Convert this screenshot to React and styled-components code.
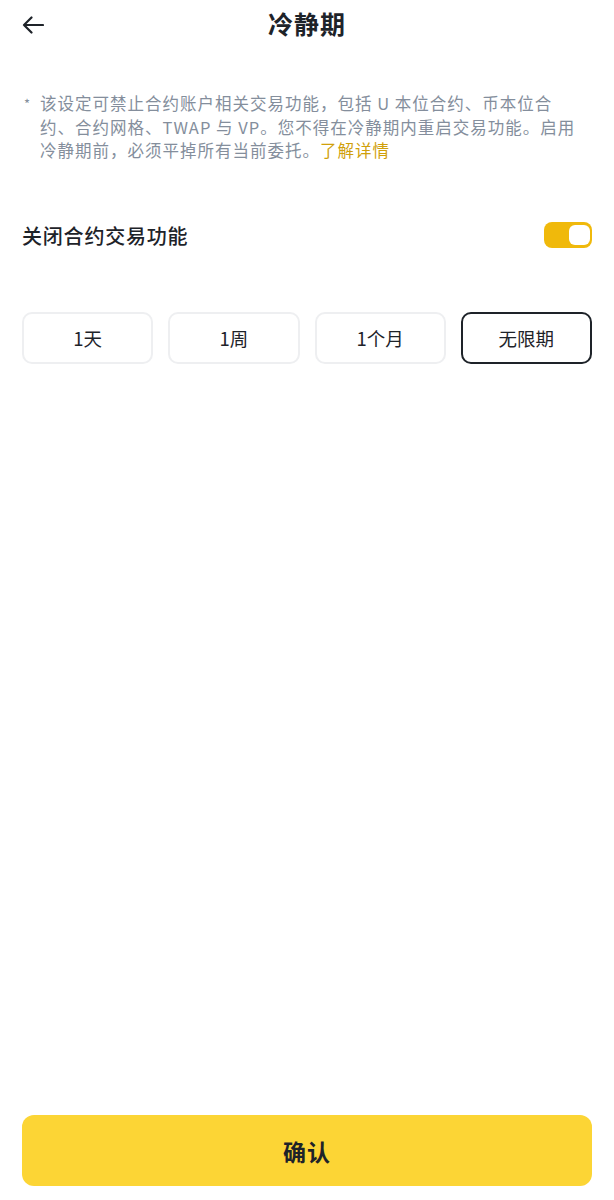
import styled, { createGlobalStyle } from 'styled-components';
import { useState } from 'react';

const GlobalStyle = createGlobalStyle`
    html, body {
        margin: 0;
        padding: 0;
        background: #fff;
    }
    body {
        font-family: "Noto Sans CJK SC", "Noto Sans", "Liberation Sans", sans-serif;
        color: #1e2329;
    }
`

const Page = styled.div`
    min-height: 100vh;
    box-sizing: border-box;
    display: flex;
    flex-direction: column;
    padding: 0 22px 14px;
`

const Header = styled.div`
    height: 46px;
    display: grid;
    grid-template-columns: 1fr auto 1fr;
    align-items: center;
`

const BackButton = styled.button`
    justify-self: start;
    display: flex;
    align-items: center;
    padding: 0;
    margin-top: 3px;
    border: none;
    background: none;
    cursor: pointer;
    color: #1e2329;
`

const Title = styled.h1`
    margin: 0;
    font-size: 25px;
    font-weight: 700;
    letter-spacing: 1px;
    line-height: 1;
`

const Note = styled.div`
    display: flex;
    margin-top: 46px;
    font-size: 16.5px;
    line-height: 23.5px;
    letter-spacing: 1px;
    color: #848e9c;
`

const Star = styled.span`
    flex: 0 0 16px;
    padding-left: 2px;
    font-size: 13px;
`

const NoteText = styled.p`
    margin: 0;
    flex: 1;
`

const MoreLink = styled.a`
    color: #d0a00a;
    text-decoration: none;
`

const SwitchRow = styled.div`
    margin-top: 58px;
    display: flex;
    align-items: center;
    justify-content: space-between;
`

const SwitchLabel = styled.span`
    font-size: 20px;
    font-weight: 500;
    letter-spacing: 0.8px;
`

const Switch = styled.button`
    width: 48px;
    height: 26px;
    box-sizing: border-box;
    padding: 3px 2px;
    border: none;
    border-radius: 8px;
    display: flex;
    justify-content: ${p => (p.$on ? 'flex-end' : 'flex-start')};
    background: ${p => (p.$on ? '#f0b90b' : '#eaecef')};
    cursor: pointer;
`

const Knob = styled.span`
    width: 21px;
    height: 20px;
    border-radius: 6px;
    background: #fff;
`

const Options = styled.div`
    margin-top: 62px;
    display: grid;
    grid-template-columns: repeat(4, 1fr);
    gap: 15px;
`

const Option = styled.button`
    height: 52px;
    box-sizing: border-box;
    border-radius: 10px;
    border: ${p => (p.$active ? '2px solid #1e2329' : '2px solid #eeeff1')};
    background: #fff;
    font-family: inherit;
    font-size: 18.5px;
    color: #1e2329;
    cursor: pointer;
`

const Confirm = styled.button`
    margin-top: auto;
    height: 71px;
    border: none;
    border-radius: 12px;
    background: #fcd535;
    font-family: inherit;
    font-size: 23px;
    font-weight: 700;
    letter-spacing: 1px;
    color: #1e2329;
    cursor: pointer;
`

const periods = ['1天', '1周', '1个月', '无限期'];

const App = () => {
    const [on, setOn] = useState(true);
    const [period, setPeriod] = useState('无限期');

    return (
        <>
            <GlobalStyle />
            <Page>
                <Header>
                    <BackButton aria-label="back">
                        <svg width="22" height="18" viewBox="0 0 22 18" fill="none" stroke="currentColor" strokeWidth="2.2" strokeLinecap="round" strokeLinejoin="round">
                            <path d="M21 9H2M9.5 1.5L2 9l7.5 7.5" />
                        </svg>
                    </BackButton>
                    <Title>冷静期</Title>
                    <span />
                </Header>

                <Note>
                    <Star>*</Star>
                    <NoteText>
                        该设定可禁止合约账户相关交易功能，包括 U 本位合约、币本位合<br />
                        约、合约网格、TWAP 与 VP。您不得在冷静期内重启交易功能。启用<br />
                        冷静期前，必须平掉所有当前委托。<MoreLink href="#">了解详情</MoreLink>
                    </NoteText>
                </Note>

                <SwitchRow>
                    <SwitchLabel>关闭合约交易功能</SwitchLabel>
                    <Switch $on={on} onClick={() => setOn(!on)}>
                        <Knob />
                    </Switch>
                </SwitchRow>

                <Options>
                    {periods.map(p => (
                        <Option key={p} $active={p === period} onClick={() => setPeriod(p)}>
                            {p}
                        </Option>
                    ))}
                </Options>

                <Confirm>确认</Confirm>
            </Page>
        </>
    );
}

export default App;
